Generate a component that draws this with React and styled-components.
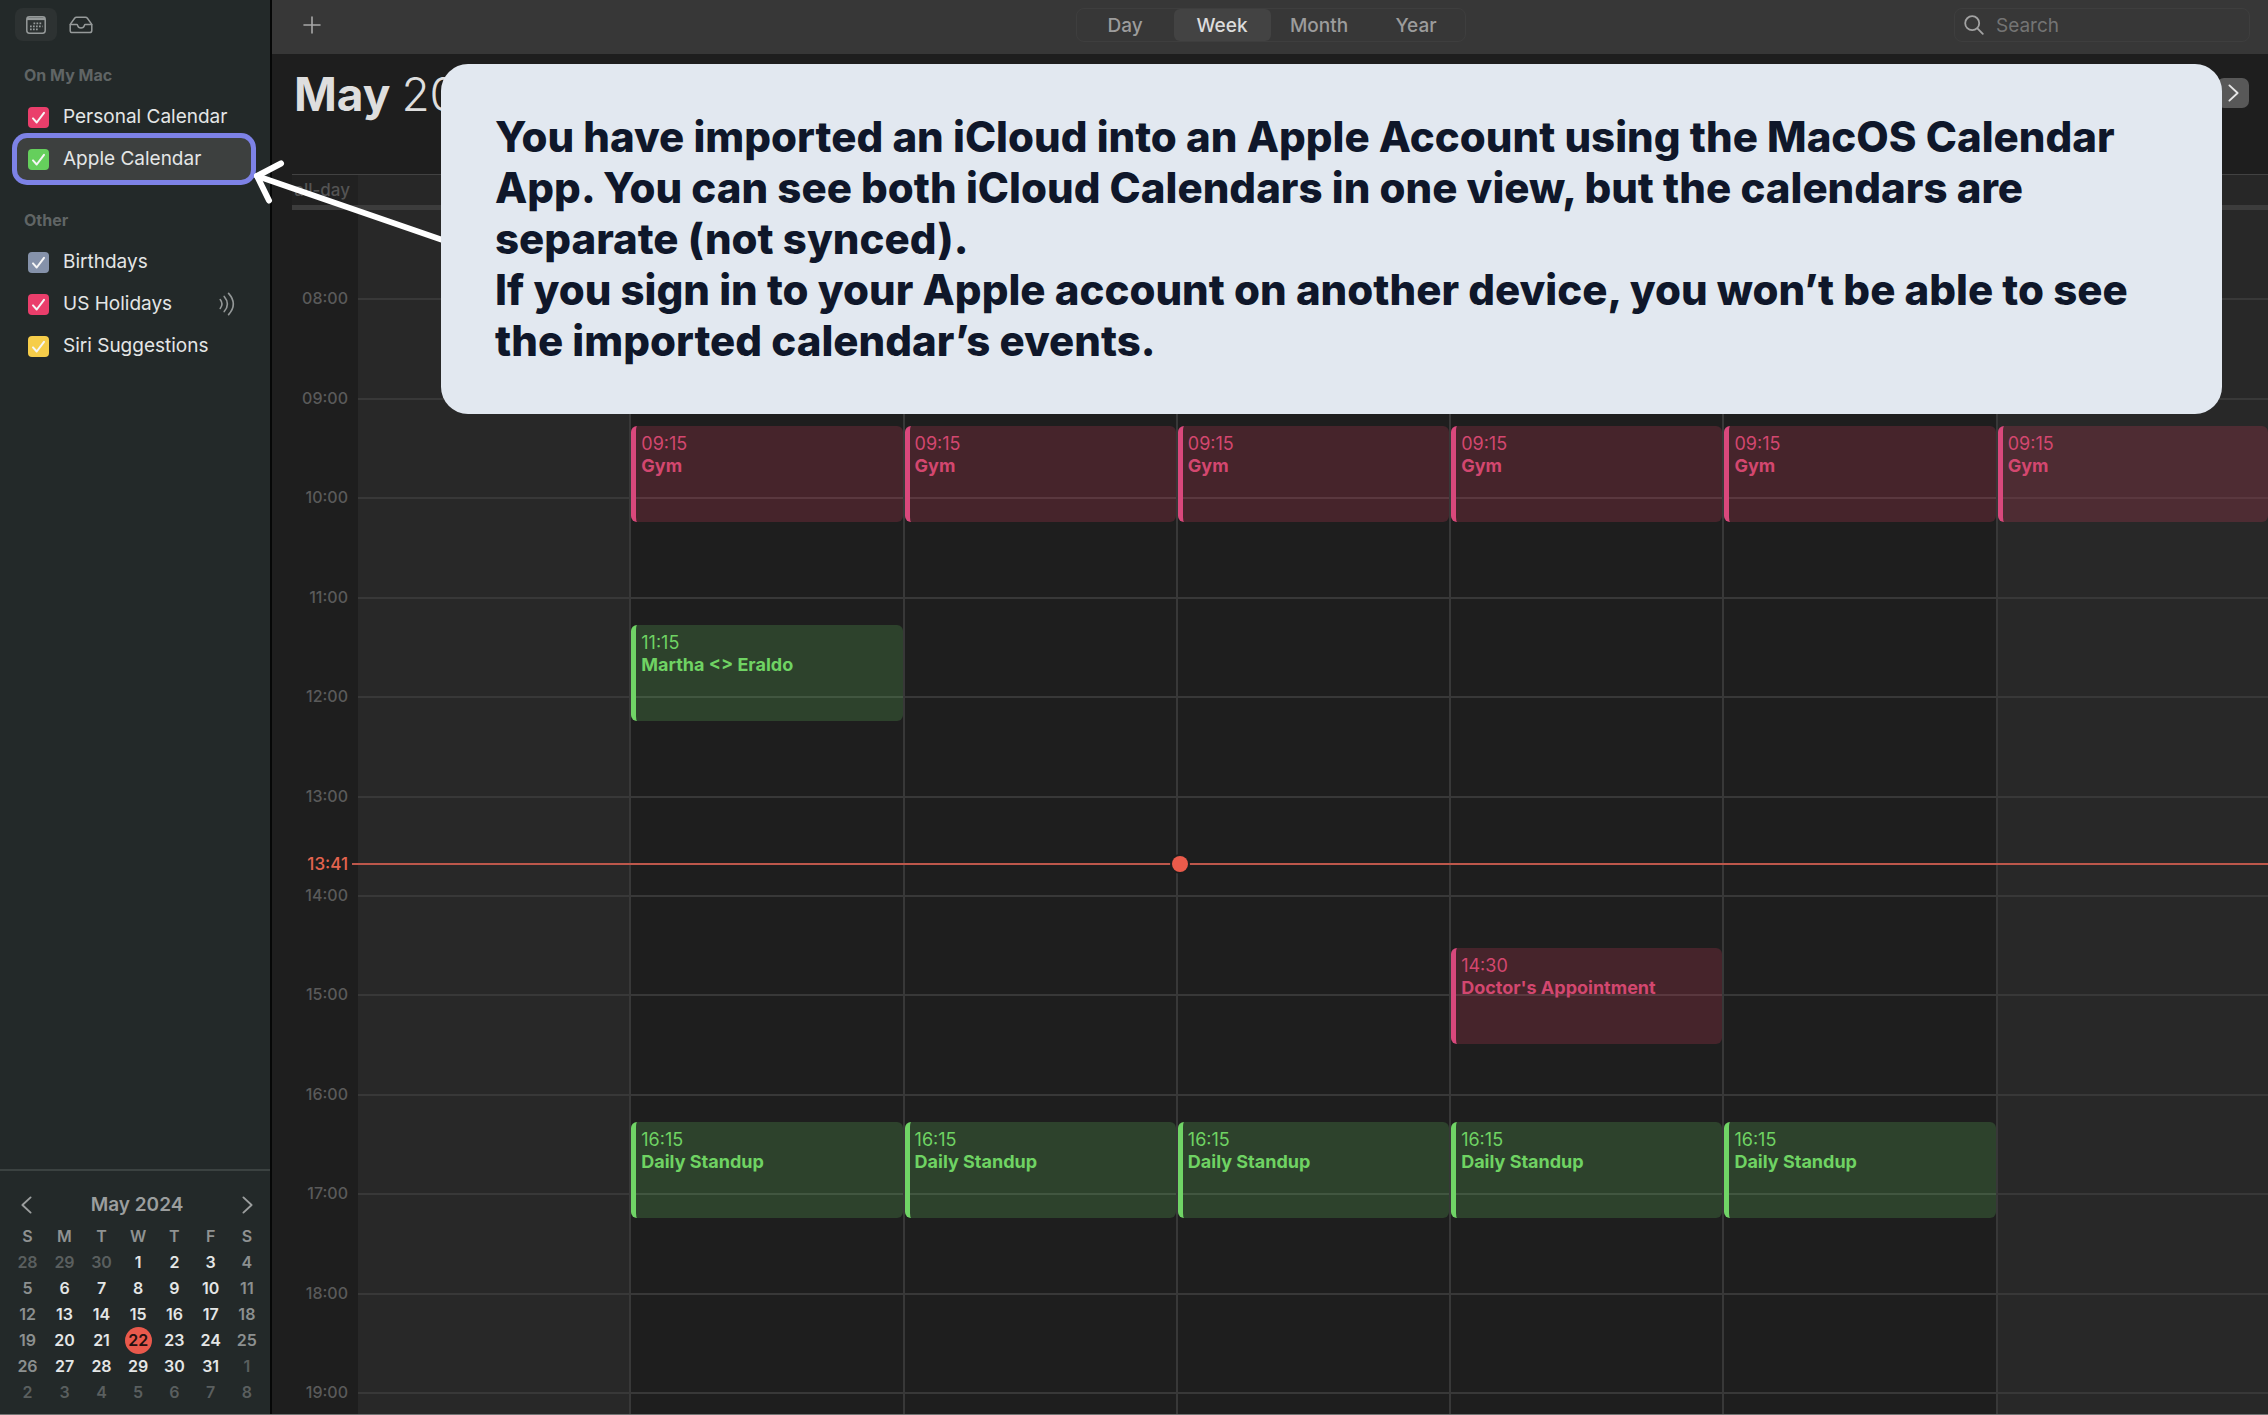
import React from 'react';
import styled, { createGlobalStyle } from 'styled-components';

const GlobalStyle = createGlobalStyle`
  * {
    box-sizing: border-box;
  }

  body {
    margin: 0;
    background: #1e1e1e;
    font-family: Inter, "Liberation Sans", sans-serif;
  }

  button, input {
    font-family: inherit;
  }
`;

const Window = styled.div`
  position: relative;
  display: flex;
  height: 100vh;
  overflow: hidden;
  border-bottom: 1px solid #747474;
  color: #e2e2e2;
`;

/* ---------- sidebar ---------- */

const Sidebar = styled.aside`
  display: flex;
  flex-direction: column;
  flex: none;
  width: 272px;
  background: #232929;
  border-right: 2px solid #060707;
`;

const SidebarTools = styled.div`
  display: flex;
  gap: 3px;
  padding: 8px 15px 0;
  margin-bottom: 24px;
`;

const ToolButton = styled.button`
  display: flex;
  align-items: center;
  justify-content: center;
  width: 42px;
  height: 33px;
  padding: 0;
  border: 0;
  border-radius: 8px;
  background: ${({ $active }) => ($active ? '#2d3232' : 'transparent')};
  color: #969a9a;
`;

const Sections = styled.div`
  display: flex;
  flex: 1;
  flex-direction: column;
  gap: 30px;
  padding: 0 19px 0 17px;
`;

const SectionTitle = styled.h2`
  margin: 0 0 11px;
  padding-left: 7px;
  color: #606565;
  font-size: 16px;
  font-weight: 700;
  line-height: 20px;
`;

const CalendarList = styled.ul`
  margin: 0;
  padding: 0;
  list-style: none;
`;

const CalendarRow = styled.li`
  display: flex;
  align-items: center;
  height: 42px;
  padding: 0 16px 0 11px;
  border-radius: 10px;
  background: ${({ $selected }) => ($selected ? '#3d403f' : 'transparent')};
  box-shadow: ${({ $selected }) => ($selected ? '0 0 0 5px #7d82e6' : 'none')};
  color: #949898;
`;

const CalendarLabel = styled.label`
  display: flex;
  flex: 1;
  align-items: center;
  gap: 14px;
  color: #e4e6e6;
  font-size: 19px;
  line-height: 24px;
  white-space: nowrap;
`;

const CheckWrap = styled.span`
  display: grid;
  width: 21px;
  height: 21px;

  > * {
    grid-area: 1 / 1;
  }
`;

const CheckBox = styled.input`
  appearance: none;
  width: 21px;
  height: 21px;
  margin: 0;
  border-radius: 4px;
  background: ${({ $color }) => $color};
`;

const CheckMark = styled.svg`
  pointer-events: none;
`;

/* ---------- mini month ---------- */

const MiniMonth = styled.section`
  padding: 22px 5px 9px 9px;
  border-top: 2px solid #3b4241;
`;

const MiniHeader = styled.div`
  display: flex;
  align-items: center;
  justify-content: space-between;
  height: 24px;
  padding: 0 12px;
  margin-bottom: 6px;
`;

const MiniTitle = styled.h3`
  margin: 0;
  color: #9b9e9e;
  font-size: 19px;
  font-weight: 600;
  line-height: 24px;
`;

const ArrowButton = styled.button`
  display: flex;
  padding: 0;
  border: 0;
  background: none;
  color: #9b9e9e;
`;

const MiniTable = styled.table`
  width: 100%;
  table-layout: fixed;
  border-collapse: collapse;
  font-size: 16px;
  line-height: 20px;
  text-align: center;
`;

const MiniHead = styled.th`
  height: 26px;
  padding: 0;
  color: #8f9292;
  font-weight: 600;

  &:nth-child(-n + 3) {
    width: 37px;
  }
`;

const dayColors = {
  out: '#5a5f5f',
  weekend: '#8c9090',
  normal: '#e4e6e6',
  today: '#241010',
};

const MiniDay = styled.td`
  height: 26px;
  padding: 0;
  color: ${({ $tone }) => dayColors[$tone]};
  font-weight: 600;
`;

const Today = styled.span`
  display: block;
  width: 27px;
  margin: -4px auto;
  border-radius: 50%;
  background: #e9594c;
  line-height: 27px;
`;

/* ---------- main area ---------- */

const Main = styled.main`
  display: flex;
  flex: 1;
  flex-direction: column;
  min-width: 0;
`;

const Toolbar = styled.div`
  display: grid;
  grid-template-columns: 1fr auto 1fr;
  align-items: start;
  flex: none;
  height: 54px;
  padding: 8px 18px 0 19px;
  background: #373737;
`;

const ViewSwitch = styled.div`
  display: flex;
  border: 1px solid #3e3e3e;
  border-radius: 8px;
`;

const ViewButton = styled.button`
  width: 97px;
  height: 32px;
  padding: 0;
  border: 0;
  border-radius: 6px;
  background: ${({ $active }) => ($active ? '#434343' : 'transparent')};
  color: ${({ $active }) => ($active ? '#dcdcdc' : '#9c9c9c')};
  font-size: 19px;
  font-weight: 500;
`;

const SearchField = styled.label`
  display: flex;
  align-items: center;
  justify-self: end;
  gap: 12px;
  width: 296px;
  height: 34px;
  padding: 0 9px;
  border: 1px solid #3e3e3e;
  border-radius: 8px;
  color: #a2a2a2;
`;

const SearchInput = styled.input`
  flex: 1;
  min-width: 0;
  padding: 0;
  border: 0;
  outline: 0;
  background: none;
  color: #dcdcdc;
  font-size: 19px;

  &::placeholder {
    color: #747474;
    opacity: 1;
  }
`;

const Header = styled.header`
  display: flex;
  align-items: flex-start;
  justify-content: space-between;
  flex: none;
  height: 120px;
  padding: 12px 19px 0 22px;
`;

const MonthTitle = styled.h1`
  margin: 0;
  color: #dedede;
  font-size: 46px;
  font-weight: 700;
  line-height: 56px;

  span {
    font-weight: 300;
  }
`;

const NextButton = styled.button`
  display: flex;
  align-items: center;
  justify-content: center;
  width: 32px;
  height: 30px;
  margin-top: 12px;
  padding: 0;
  border: 0;
  border-radius: 7px;
  background: #585858;
  color: #e6e6e6;
`;

const AllDay = styled.div`
  display: flex;
  flex: none;
  height: 36px;
  margin-left: 20px;
  border-top: 1px solid #424242;
  border-bottom: 5px solid #3c3c3c;
`;

const AllDayLabel = styled.div`
  width: 66px;
  padding-right: 8px;
  background: #212121;
  color: #545454;
  font-size: 17px;
  font-weight: 500;
  line-height: 30px;
  text-align: right;
`;

const AllDayCells = styled.div`
  display: grid;
  flex: 1;
  grid-template-columns: repeat(7, 1fr);
`;

const AllDayCell = styled.div`
  background: ${({ $weekend }) => ($weekend ? '#272727' : '#1e1e1e')};
`;

const Scroller = styled.div`
  flex: 1;
  min-height: 0;
  overflow: hidden;
`;

const Week = styled.div`
  display: flex;
  height: calc(100% + 14px);
  margin-top: -11px;
`;

/* one track per quarter of an hour, 07:00 to 19:15 */
const quarters = `
  display: grid;
  grid-template-rows: repeat(49, minmax(0, 1fr));
`;

const Gutter = styled.div`
  position: relative;
  ${quarters}
  flex: none;
  width: 86px;
  padding-right: 10px;
`;

const HourLabel = styled.div`
  grid-row: ${({ $row }) => $row};
  height: 20px;
  margin-top: -10px;
  color: #5a5a5a;
  font-size: 16px;
  font-weight: 500;
  line-height: 20px;
  text-align: right;
`;

const NowLabel = styled(HourLabel)`
  position: absolute;
  right: 10px;
  color: #e4644f;
  font-size: 17px;
`;

const Days = styled.div`
  position: relative;
  display: grid;
  flex: 1;
  grid-template-columns: repeat(7, 1fr);
  margin-right: -3px;
`;

const Day = styled.div`
  ${quarters}
  border-right: 2px solid #383838;
  background: ${({ $weekend }) => ($weekend ? '#282828' : '#1e1e1e')};

  &:last-child {
    padding-right: 3px;
    border-right: 0;
  }
`;

const HourLine = styled.div`
  grid-row: ${({ $row }) => $row};
  grid-column: 1;
  height: 2px;
  background: #383838;
`;

const eventTones = {
  pink: { back: 'rgba(190, 55, 83, 0.25)', bar: '#d9487c', text: '#d3476f' },
  green: { back: 'rgba(90, 174, 86, 0.25)', bar: '#70d466', text: '#6fd363' },
};

const EventBlock = styled.article`
  z-index: 1;
  grid-row: ${({ $row }) => $row} / span 4;
  grid-column: 1;
  margin: 3px 0 0;
  padding: 7px 4px 0 5px;
  overflow: hidden;
  border-left: 5px solid ${({ $tone }) => eventTones[$tone].bar};
  border-radius: 6px;
  background: ${({ $tone }) => eventTones[$tone].back};
  color: ${({ $tone }) => eventTones[$tone].text};
  font-size: 18px;
  line-height: 22px;
`;

const EventTime = styled.time`
  display: block;
`;

const EventTitle = styled.strong`
  display: block;
  font-weight: 700;
`;

const NowLine = styled.div`
  position: absolute;
  right: 0;
  left: -6px;
  z-index: 2;
  height: 2px;
  margin-top: -1px;
  background: #bd574b;
`;

const NowDot = styled.span`
  position: absolute;
  top: -7px;
  width: 16px;
  height: 16px;
  margin-left: -2px;
  border-radius: 50%;
  background: #ea5b4b;
  box-shadow: 0 0 0 2px #1e1e1e;
`;

/* ---------- annotation ---------- */

const Callout = styled.div`
  position: absolute;
  top: 64px;
  right: 46px;
  left: 441px;
  z-index: 4;
  padding: 47px 54px 48px;
  border-radius: 27px;
  background: #e2e8f0;
  color: #0f172a;
  font-size: 42px;
  font-weight: 800;
  line-height: 51px;

  p {
    margin: 0;
  }
`;

const Pointer = styled.svg`
  position: absolute;
  top: 150px;
  left: 246px;
  z-index: 3;
`;

const CALENDARS = [
  {
    title: 'On My Mac',
    items: [
      { name: 'Personal Calendar', color: '#ea3e6b' },
      { name: 'Apple Calendar', color: '#65cf5c', selected: true },
    ],
  },
  {
    title: 'Other',
    items: [
      { name: 'Birthdays', color: '#8592aa' },
      { name: 'US Holidays', color: '#ea3e6b', shared: true },
      { name: 'Siri Suggestions', color: '#f6cd4a' },
    ],
  },
];

const MONTH = [
  [28, 29, 30, 1, 2, 3, 4],
  [5, 6, 7, 8, 9, 10, 11],
  [12, 13, 14, 15, 16, 17, 18],
  [19, 20, 21, 22, 23, 24, 25],
  [26, 27, 28, 29, 30, 31, 1],
  [2, 3, 4, 5, 6, 7, 8],
];

const START = 7;
const SPAN = 12.25;
const HOURS = [8, 9, 10, 11, 12, 13, 14, 15, 16, 17, 18, 19];
const NOW = { label: '13:41', hour: 13 + 41 / 60, day: 3 };

const gym = { time: '09:15', title: 'Gym', tone: 'pink' };
const standup = { time: '16:15', title: 'Daily Standup', tone: 'green' };

const WEEK = [
  [],
  [gym, { time: '11:15', title: 'Martha <> Eraldo', tone: 'green' }, standup],
  [gym, standup],
  [gym, standup],
  [gym, { time: '14:30', title: "Doctor's Appointment", tone: 'pink' }, standup],
  [gym, standup],
  [gym],
];

const rowOf = (time) => {
  const [h, m] = time.split(':').map(Number);
  return (h - START) * 4 + m / 15 + 1;
};

const toneOf = (week, col, day) => {
  if ((week === 0 && day > 20) || (week > 3 && day < 10)) return 'out';
  if (week === 3 && day === 22) return 'today';
  return col === 0 || col === 6 ? 'weekend' : 'normal';
};

const CalendarIcon = () => (
  <svg width="20" height="18" viewBox="0 0 20 18" fill="none" stroke="currentColor">
    <rect x="0.8" y="0.8" width="18.4" height="16.4" rx="2.6" strokeWidth="1.5" />
    <path d="M1 2.8h18" strokeWidth="2.6" />
    <path d="M7.5 7.4h9M4 10.4h12.5M4 13.4h9" strokeWidth="1.6" strokeDasharray="1.7 1.3" />
  </svg>
);

const TrayIcon = () => (
  <svg width="24" height="18" viewBox="0 0 24 18" fill="none" stroke="currentColor" strokeWidth="1.5" strokeLinejoin="round" strokeLinecap="round">
    <path d="M1.2 8.4 5.6 2.2Q6.3 1.2 7.5 1.2h9q1.2 0 1.9 1l4.4 6.2v6q0 2.2-2.2 2.2H3.4q-2.2 0-2.2-2.2z" />
    <path d="M1.4 8.6h6.2q.8 0 1 .8a3.5 3.5 0 0 0 6.8 0q.2-.8 1-.8h6.2" />
  </svg>
);

const SharedIcon = () => (
  <svg width="16" height="24" viewBox="0 0 16 24" fill="none" stroke="currentColor" strokeWidth="1.6" strokeLinecap="round">
    <path d="M1.2 7.5q3.6 4.5 0 9" />
    <path d="M5.2 4.4q6.4 7.6 0 15.2" />
    <path d="M9.6 1.4q9.4 10.6 0 21.2" />
  </svg>
);

const PlusIcon = () => (
  <svg width="18" height="18" viewBox="0 0 18 18" stroke="#a8a8a8" strokeWidth="1.6" strokeLinecap="round">
    <path d="M9 1v16M1 9h16" />
  </svg>
);

const SearchIcon = () => (
  <svg width="20" height="20" viewBox="0 0 20 20" fill="none" stroke="currentColor" strokeWidth="1.8" strokeLinecap="round">
    <circle cx="8.2" cy="8.2" r="7" />
    <path d="m13.4 13.4 5.4 5.4" />
  </svg>
);

const Chevron = ({ left }) => (
  <svg width="11" height="18" viewBox="0 0 11 18" fill="none" stroke="currentColor" strokeWidth="1.9" strokeLinecap="round" strokeLinejoin="round">
    <path d={left ? 'M9.6 1.4 1.4 9l8.2 7.6' : 'M1.4 1.4 9.6 9l-8.2 7.6'} />
  </svg>
);

const CalendarItem = ({ name, color, selected, shared }) => (
  <CalendarRow $selected={selected}>
    <CalendarLabel>
      <CheckWrap>
        <CheckBox type="checkbox" defaultChecked $color={color} />
        <CheckMark width="21" height="21" viewBox="0 0 21 21" fill="none" stroke="#f6f6f6" strokeWidth="2" strokeLinecap="round" strokeLinejoin="round">
          <path d="m5 11.4 3.7 4.1L16 5.8" />
        </CheckMark>
      </CheckWrap>
      {name}
    </CalendarLabel>
    {shared && <SharedIcon />}
  </CalendarRow>
);

const SidePanel = () => (
  <Sidebar>
    <SidebarTools>
      <ToolButton $active aria-label="Calendars"><CalendarIcon /></ToolButton>
      <ToolButton aria-label="Inbox"><TrayIcon /></ToolButton>
    </SidebarTools>
    <Sections>
      {CALENDARS.map((section) => (
        <section key={section.title}>
          <SectionTitle>{section.title}</SectionTitle>
          <CalendarList>
            {section.items.map((item) => (
              <CalendarItem key={item.name} {...item} />
            ))}
          </CalendarList>
        </section>
      ))}
    </Sections>
    <MiniMonth>
      <MiniHeader>
        <ArrowButton aria-label="Previous month"><Chevron left /></ArrowButton>
        <MiniTitle>May 2024</MiniTitle>
        <ArrowButton aria-label="Next month"><Chevron /></ArrowButton>
      </MiniHeader>
      <MiniTable>
        <thead>
          <tr>
            {['S', 'M', 'T', 'W', 'T', 'F', 'S'].map((d, i) => (
              <MiniHead key={i}>{d}</MiniHead>
            ))}
          </tr>
        </thead>
        <tbody>
          {MONTH.map((week, w) => (
            <tr key={w}>
              {week.map((day, i) => {
                const tone = toneOf(w, i, day);
                return (
                  <MiniDay key={i} $tone={tone}>
                    {tone === 'today' ? <Today>{day}</Today> : day}
                  </MiniDay>
                );
              })}
            </tr>
          ))}
        </tbody>
      </MiniTable>
    </MiniMonth>
  </Sidebar>
);

const WeekView = () => {
  const nowTop = `${((NOW.hour - START) / SPAN) * 100}%`;

  return (
    <Scroller>
      <Week>
        <Gutter>
          {HOURS.map((h) => (
            <HourLabel key={h} $row={(h - START) * 4 + 1}>
              {String(h).padStart(2, '0')}:00
            </HourLabel>
          ))}
          <NowLabel style={{ top: nowTop }}>{NOW.label}</NowLabel>
        </Gutter>
        <Days>
          <NowLine style={{ top: nowTop }}>
            <NowDot style={{ left: `${(NOW.day / 7) * 100}%` }} />
          </NowLine>
          {WEEK.map((events, i) => (
            <Day key={i} $weekend={i === 0 || i === 6}>
              {HOURS.map((h) => (
                <HourLine key={h} $row={(h - START) * 4 + 1} />
              ))}
              {events.map((e) => (
                <EventBlock key={e.time} $row={rowOf(e.time)} $tone={e.tone}>
                  <EventTime>{e.time}</EventTime>
                  <EventTitle>{e.title}</EventTitle>
                </EventBlock>
              ))}
            </Day>
          ))}
        </Days>
      </Week>
    </Scroller>
  );
};

const App = () => (
  <>
    <GlobalStyle />
    <Window>
      <SidePanel />
      <Main>
        <Toolbar>
          <ToolButton aria-label="Add event"><PlusIcon /></ToolButton>
          <ViewSwitch>
            {['Day', 'Week', 'Month', 'Year'].map((view) => (
              <ViewButton key={view} $active={view === 'Week'}>{view}</ViewButton>
            ))}
          </ViewSwitch>
          <SearchField>
            <SearchIcon />
            <SearchInput type="text" placeholder="Search" aria-label="Search" />
          </SearchField>
        </Toolbar>
        <Header>
          <MonthTitle>May <span>2024</span></MonthTitle>
          <NextButton aria-label="Next week"><Chevron /></NextButton>
        </Header>
        <AllDay>
          <AllDayLabel>all-day</AllDayLabel>
          <AllDayCells>
            {WEEK.map((_, i) => (
              <AllDayCell key={i} $weekend={i === 0 || i === 6} />
            ))}
          </AllDayCells>
        </AllDay>
        <WeekView />
      </Main>
      <Pointer width="200" height="100" viewBox="0 0 200 100" fill="none" stroke="#fff" strokeWidth="6" strokeLinecap="round" strokeLinejoin="round">
        <path d="M198 90.5 11 26" />
        <path d="M35 13.5 11 26l12 24.5" />
      </Pointer>
      <Callout>
        <p>
          You have imported an iCloud into an Apple Account using the MacOS Calendar App. You can
          see both iCloud Calendars in one view, but the calendars are separate (not synced).
        </p>
        <p>
          If you sign in to your Apple account on another device, you won’t be able to see the
          imported calendar’s events.
        </p>
      </Callout>
    </Window>
  </>
);

export default App;
